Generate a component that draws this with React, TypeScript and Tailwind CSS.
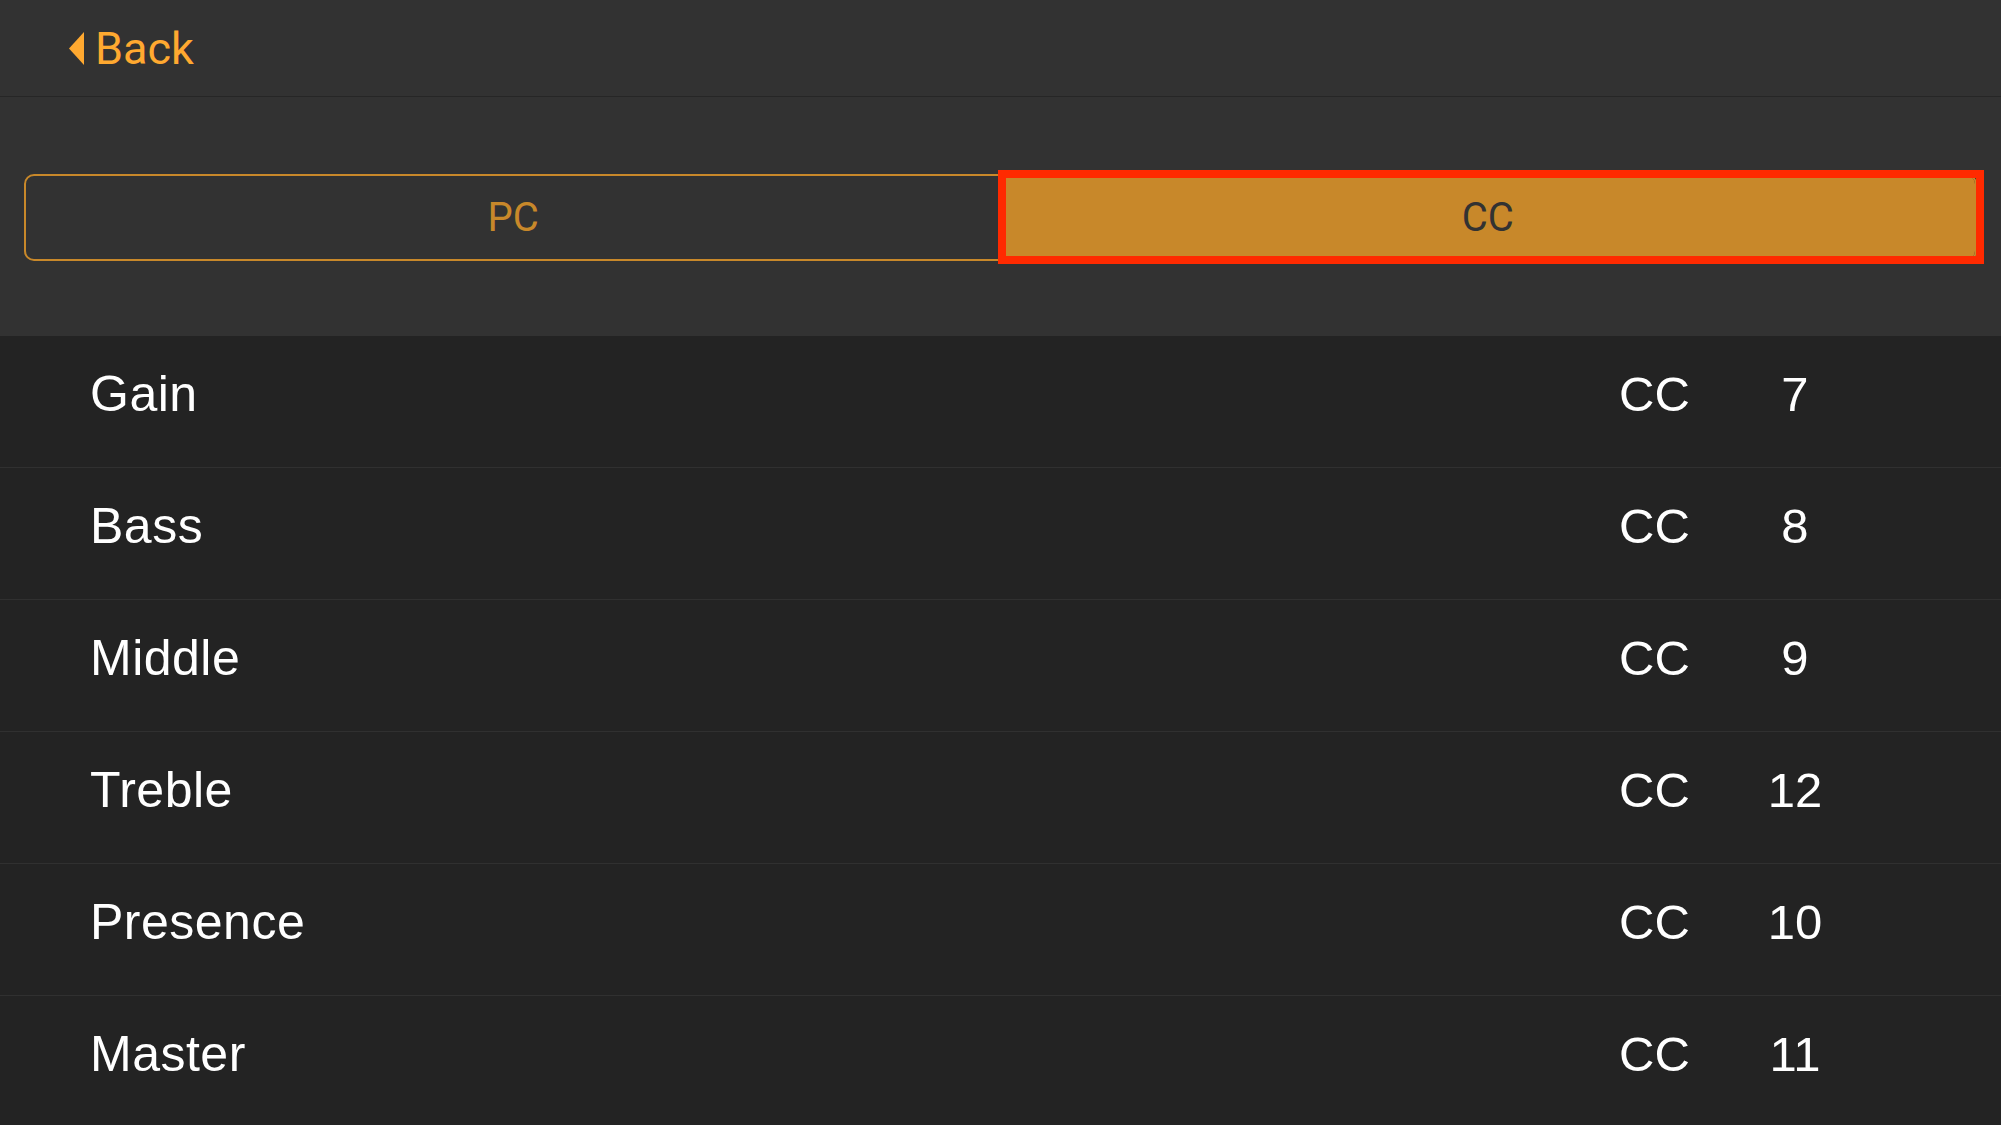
import { clsx } from 'clsx'

const ROWS: { name: string; cc: number }[] = [
  { name: 'Gain', cc: 7 },
  { name: 'Bass', cc: 8 },
  { name: 'Middle', cc: 9 },
  { name: 'Treble', cc: 12 },
  { name: 'Presence', cc: 10 },
  { name: 'Master', cc: 11 },
]

export default function App() {
  return (
    <div className="w-[2001px] h-[1125px] overflow-hidden bg-[#232323] font-['Liberation_Sans',Arial,sans-serif]">
      <Header />
      <div className="h-[239px] bg-[#323232] pt-[77px] px-[24px]">
        <Segmented />
      </div>
      <div>
        {ROWS.map((row) => (
          <MappingRow key={row.name} name={row.name} cc={row.cc} />
        ))}
      </div>
    </div>
  )
}

function Header() {
  return (
    <div className="h-[97px] bg-[#323232] border-b border-[#262626] flex items-center pl-[69px]">
      <button type="button" className="flex items-center gap-[11px] text-[#ffa930]">
        <svg width="15" height="33" viewBox="0 0 15 33" className="shrink-0">
          <path d="M15 0 L0 16.5 L15 33 Z" fill="currentColor" />
        </svg>
        <span className="font-['Roboto',sans-serif] text-[45px] leading-none">Back</span>
      </button>
    </div>
  )
}

function Segmented() {
  const selected = 'CC'
  return (
    <div className="relative">
      <div className="h-[87px] flex rounded-[10px] border-2 border-[#c8882a] overflow-hidden font-['Roboto',sans-serif] text-[40px] leading-none">
        {['PC', 'CC'].map((label) => (
          <div
            key={label}
            className={clsx(
              'flex-1 flex items-center justify-center',
              label === selected ? 'bg-[#c8882a] text-[#323232]' : 'text-[#c8882a]'
            )}
          >
            {label}
          </div>
        ))}
      </div>
      {/* highlight annotation around the selected segment */}
      <div className="absolute left-[974px] top-[-4px] w-[986px] h-[94px] border-8 border-[#ff2a00] pointer-events-none" />
    </div>
  )
}

function MappingRow({ name, cc }: { name: string; cc: number }) {
  return (
    <div className="h-[132px] border-b border-[#303030] flex items-start pt-[34px] pl-[90px] pr-[156px] text-white text-[49px] leading-none">
      <span className="flex-1 text-[50px] tracking-[0.5px] -mt-[1px]">{name}</span>
      <span className="w-[126px]">CC</span>
      <span className="w-[100px] text-center">{cc}</span>
    </div>
  )
}
